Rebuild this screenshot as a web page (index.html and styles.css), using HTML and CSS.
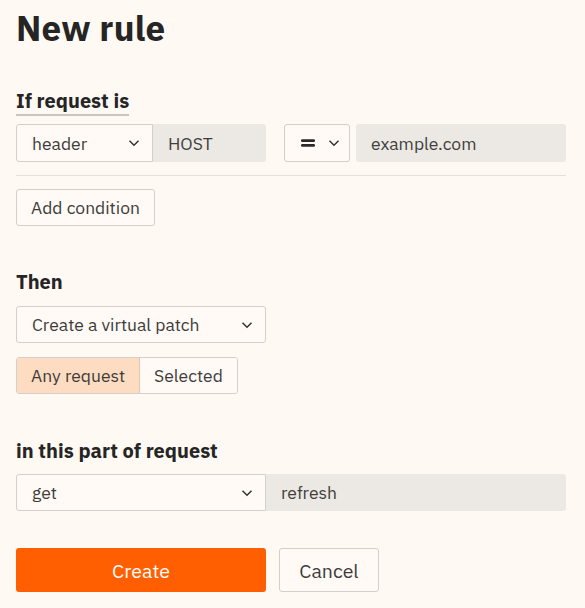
FILE: index.html
```html
<!DOCTYPE html>
<html>
<head>
<meta charset="utf-8">
<link rel="stylesheet" href="styles.css">
</head>
<body>
<div class="page">
  <h1 class="title">New rule</h1>

  <section class="block block-if">
    <h2 class="heading heading-underlined">If request is</h2>
    <div class="cond-row">
      <div class="group group-left">
        <div class="select select-point">
          <span>header</span>
          <svg class="chev" width="12" height="8" viewBox="0 0 12 8"><path d="M1.5 1.8 L6 6.2 L10.5 1.8" fill="none" stroke="#333" stroke-width="1.5"/></svg>
        </div>
        <div class="input input-host">HOST</div>
      </div>
      <div class="group group-right">
        <div class="select select-op">
          <svg class="eq" width="14" height="10" viewBox="0 0 14 10"><rect x="0" y="1.2" width="14" height="2.8" rx="1.2" fill="#2a2a2a"/><rect x="0" y="6" width="14" height="2.8" rx="1.2" fill="#2a2a2a"/></svg>
          <svg class="chev" width="12" height="8" viewBox="0 0 12 8"><path d="M1.5 1.8 L6 6.2 L10.5 1.8" fill="none" stroke="#333" stroke-width="1.5"/></svg>
        </div>
        <div class="input input-value">example.com</div>
      </div>
    </div>
    <div class="divider"></div>
    <button class="btn btn-outline btn-add">Add condition</button>
  </section>

  <section class="block block-then">
    <h2 class="heading">Then</h2>
    <div class="select select-action">
      <span>Create a virtual patch</span>
      <svg class="chev" width="12" height="8" viewBox="0 0 12 8"><path d="M1.5 1.8 L6 6.2 L10.5 1.8" fill="none" stroke="#333" stroke-width="1.5"/></svg>
    </div>
    <div class="segmented">
      <div class="seg seg-active">Any request</div>
      <div class="seg">Selected</div>
    </div>
  </section>

  <section class="block block-part">
    <h2 class="heading">in this part of request</h2>
    <div class="group group-part">
      <div class="select select-part">
        <span>get</span>
        <svg class="chev" width="12" height="8" viewBox="0 0 12 8"><path d="M1.5 1.8 L6 6.2 L10.5 1.8" fill="none" stroke="#333" stroke-width="1.5"/></svg>
      </div>
      <div class="input input-part">refresh</div>
    </div>
  </section>

  <div class="actions">
    <button class="btn btn-primary">Create</button>
    <button class="btn btn-outline btn-cancel">Cancel</button>
  </div>
</div>
</body>
</html>
```

FILE: styles.css
```css
* { box-sizing: border-box; }
html, body {
  margin: 0;
  background: #fff9f3;
}
body {
  font-family: "IBM Plex Sans", "Noto Sans", "Liberation Sans", sans-serif;
  color: #2b2a29;
}
.page {
  width: 585px;
  height: 608px;
  padding: 0 19px 0 16px;
  display: flex;
  flex-direction: column;
}
.title {
  margin: 6px 0 0 0;
  font-size: 35px;
  line-height: 44px;
  font-weight: 700;
  letter-spacing: 0.2px;
  color: #262525;
}
.heading {
  margin: 0;
  font-size: 20px;
  line-height: 26px;
  font-weight: 700;
  color: #262525;
  align-self: flex-start;
}
.block {
  display: flex;
  flex-direction: column;
}
.block-if { margin-top: 40px; }
.heading-underlined {
  border-bottom: 2px solid #c9c6c2;
  line-height: 22px;
  padding-bottom: 2px;
}
.cond-row {
  margin-top: 8px;
  display: flex;
  gap: 18px;
}
.group { display: flex; }
.select {
  height: 38px;
  background: #fffaf5;
  border: 1px solid #d3cfca;
  border-radius: 3px;
  display: flex;
  align-items: center;
  justify-content: space-between;
  padding: 0 12px 0 15px;
  font-size: 17.5px;
  color: #3d3c3b;
}
.input {
  height: 38px;
  background: #ece8e3;
  border-radius: 3px;
  display: flex;
  align-items: center;
  padding: 0 15px;
  font-size: 17.5px;
  color: #403f3e;
}
.select-point { width: 137px; border-radius: 3px 0 0 3px; }
.input-host { width: 113px; border-radius: 0 3px 3px 0; }
.select-op { width: 66px; padding: 0 9px 0 16px; }
.input-value { width: 210px; margin-left: 6px; }
.divider {
  margin-top: 13px;
  height: 1px;
  background: #e4e0db;
  width: 550px;
}
.btn {
  font-family: inherit;
  font-size: 17.5px;
  border-radius: 3px;
  cursor: pointer;
}
.btn-outline {
  background: #fffaf5;
  border: 1px solid #d3cfca;
  color: #3d3c3b;
}
.btn-add {
  margin-top: 13px;
  align-self: flex-start;
  height: 37px;
  padding: 0 14px;
}
.block-then { margin-top: 43px; }
.select-action {
  margin-top: 11px;
  width: 250px;
  height: 37px;
}
.segmented {
  margin-top: 14px;
  display: flex;
  align-self: flex-start;
  border: 1px solid #d3cfca;
  border-radius: 3px;
  overflow: hidden;
}
.seg {
  height: 35px;
  display: flex;
  align-items: center;
  padding: 0 14px;
  font-size: 17.5px;
  color: #3d3c3b;
  background: #fffaf5;
}
.seg-active {
  background: #fedcc1;
  border-right: 1px solid #e6c7ae;
}
.block-part { margin-top: 44px; }
.group-part { margin-top: 10px; }
.select-part { width: 250px; height: 37px; border-radius: 3px 0 0 3px; }
.input-part { width: 300px; height: 37px; border-radius: 0 3px 3px 0; }
.actions {
  margin-top: 37px;
  display: flex;
  gap: 13px;
}
.btn-primary {
  width: 250px;
  height: 44px;
  background: #ff5f00;
  border: none;
  color: #fff;
  font-size: 19.5px;
}
.btn-cancel {
  width: 100px;
  height: 44px;
  font-size: 19.5px;
}
```
